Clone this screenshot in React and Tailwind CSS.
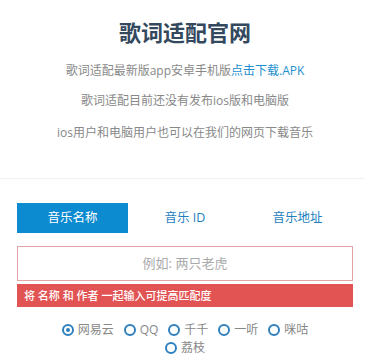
import React from "react";

const font = { fontFamily: '"Open Sans", "Noto Sans CJK SC", sans-serif' };

function Radio({ label, checked }) {
  return (
    <label className="flex items-center gap-[4px] mx-[5px]">
      <span className="w-[12px] h-[12px] rounded-full border-2 border-[#2f80bf] flex items-center justify-center">
        {checked && <span className="w-[4px] h-[4px] rounded-full bg-[#2f80bf]" />}
      </span>
      <span className="text-[12px] leading-[18px] text-[#888]">{label}</span>
    </label>
  );
}

export default function App() {
  return (
    <div className="w-[365px] h-[361px] bg-white overflow-hidden" style={font}>
      <div className="w-[370px]">
        <div className="pt-[17px] pb-[35px] text-center border-b border-[#f2f2f2]">
          <h1 className="text-[22px] leading-[30px] font-bold text-[#34495e]">歌词适配官网</h1>
          <p className="mt-[14px] text-[12px] leading-[20px] text-[#888]">
            歌词适配最新版app安卓手机版<span className="text-[#1e8fd0]">点击下载.APK</span>
          </p>
          <p className="mt-[10px] text-[12px] leading-[20px] text-[#888]">歌词适配目前还没有发布ios版和电脑版</p>
          <p className="mt-[12px] text-[12px] leading-[20px] text-[#888]">ios用户和电脑用户也可以在我们的网页下载音乐</p>
        </div>
        <div className="px-[17px] pt-[24px]">
          <div className="flex justify-between h-[30px]">
            <div className="w-[33%] flex items-center justify-center bg-[#0d8bd0] text-white text-[12.5px]">音乐名称</div>
            <div className="w-[33%] flex items-center justify-center text-[#1e7fc0] text-[12.5px]">音乐 ID</div>
            <div className="w-[33%] flex items-center justify-center text-[#1e7fc0] text-[12.5px]">音乐地址</div>
          </div>
          <div className="mt-[13px] h-[35px] border border-[#e2a4a4] flex items-center justify-center text-[13px] text-[#aaa]">
            例如: 两只老虎
          </div>
          <div className="mt-[3px] h-[23px] bg-[#e25454] text-white text-[11px] font-medium leading-[23px] px-[7px]">
            将 名称 和 作者 一起输入可提高匹配度
          </div>
          <div className="mt-[14px] flex flex-wrap justify-center px-[36px]">
            <Radio label="网易云" checked />
            <Radio label="QQ" />
            <Radio label="千千" />
            <Radio label="一听" />
            <Radio label="咪咕" />
            <Radio label="荔枝" />
          </div>
        </div>
      </div>
    </div>
  );
}
